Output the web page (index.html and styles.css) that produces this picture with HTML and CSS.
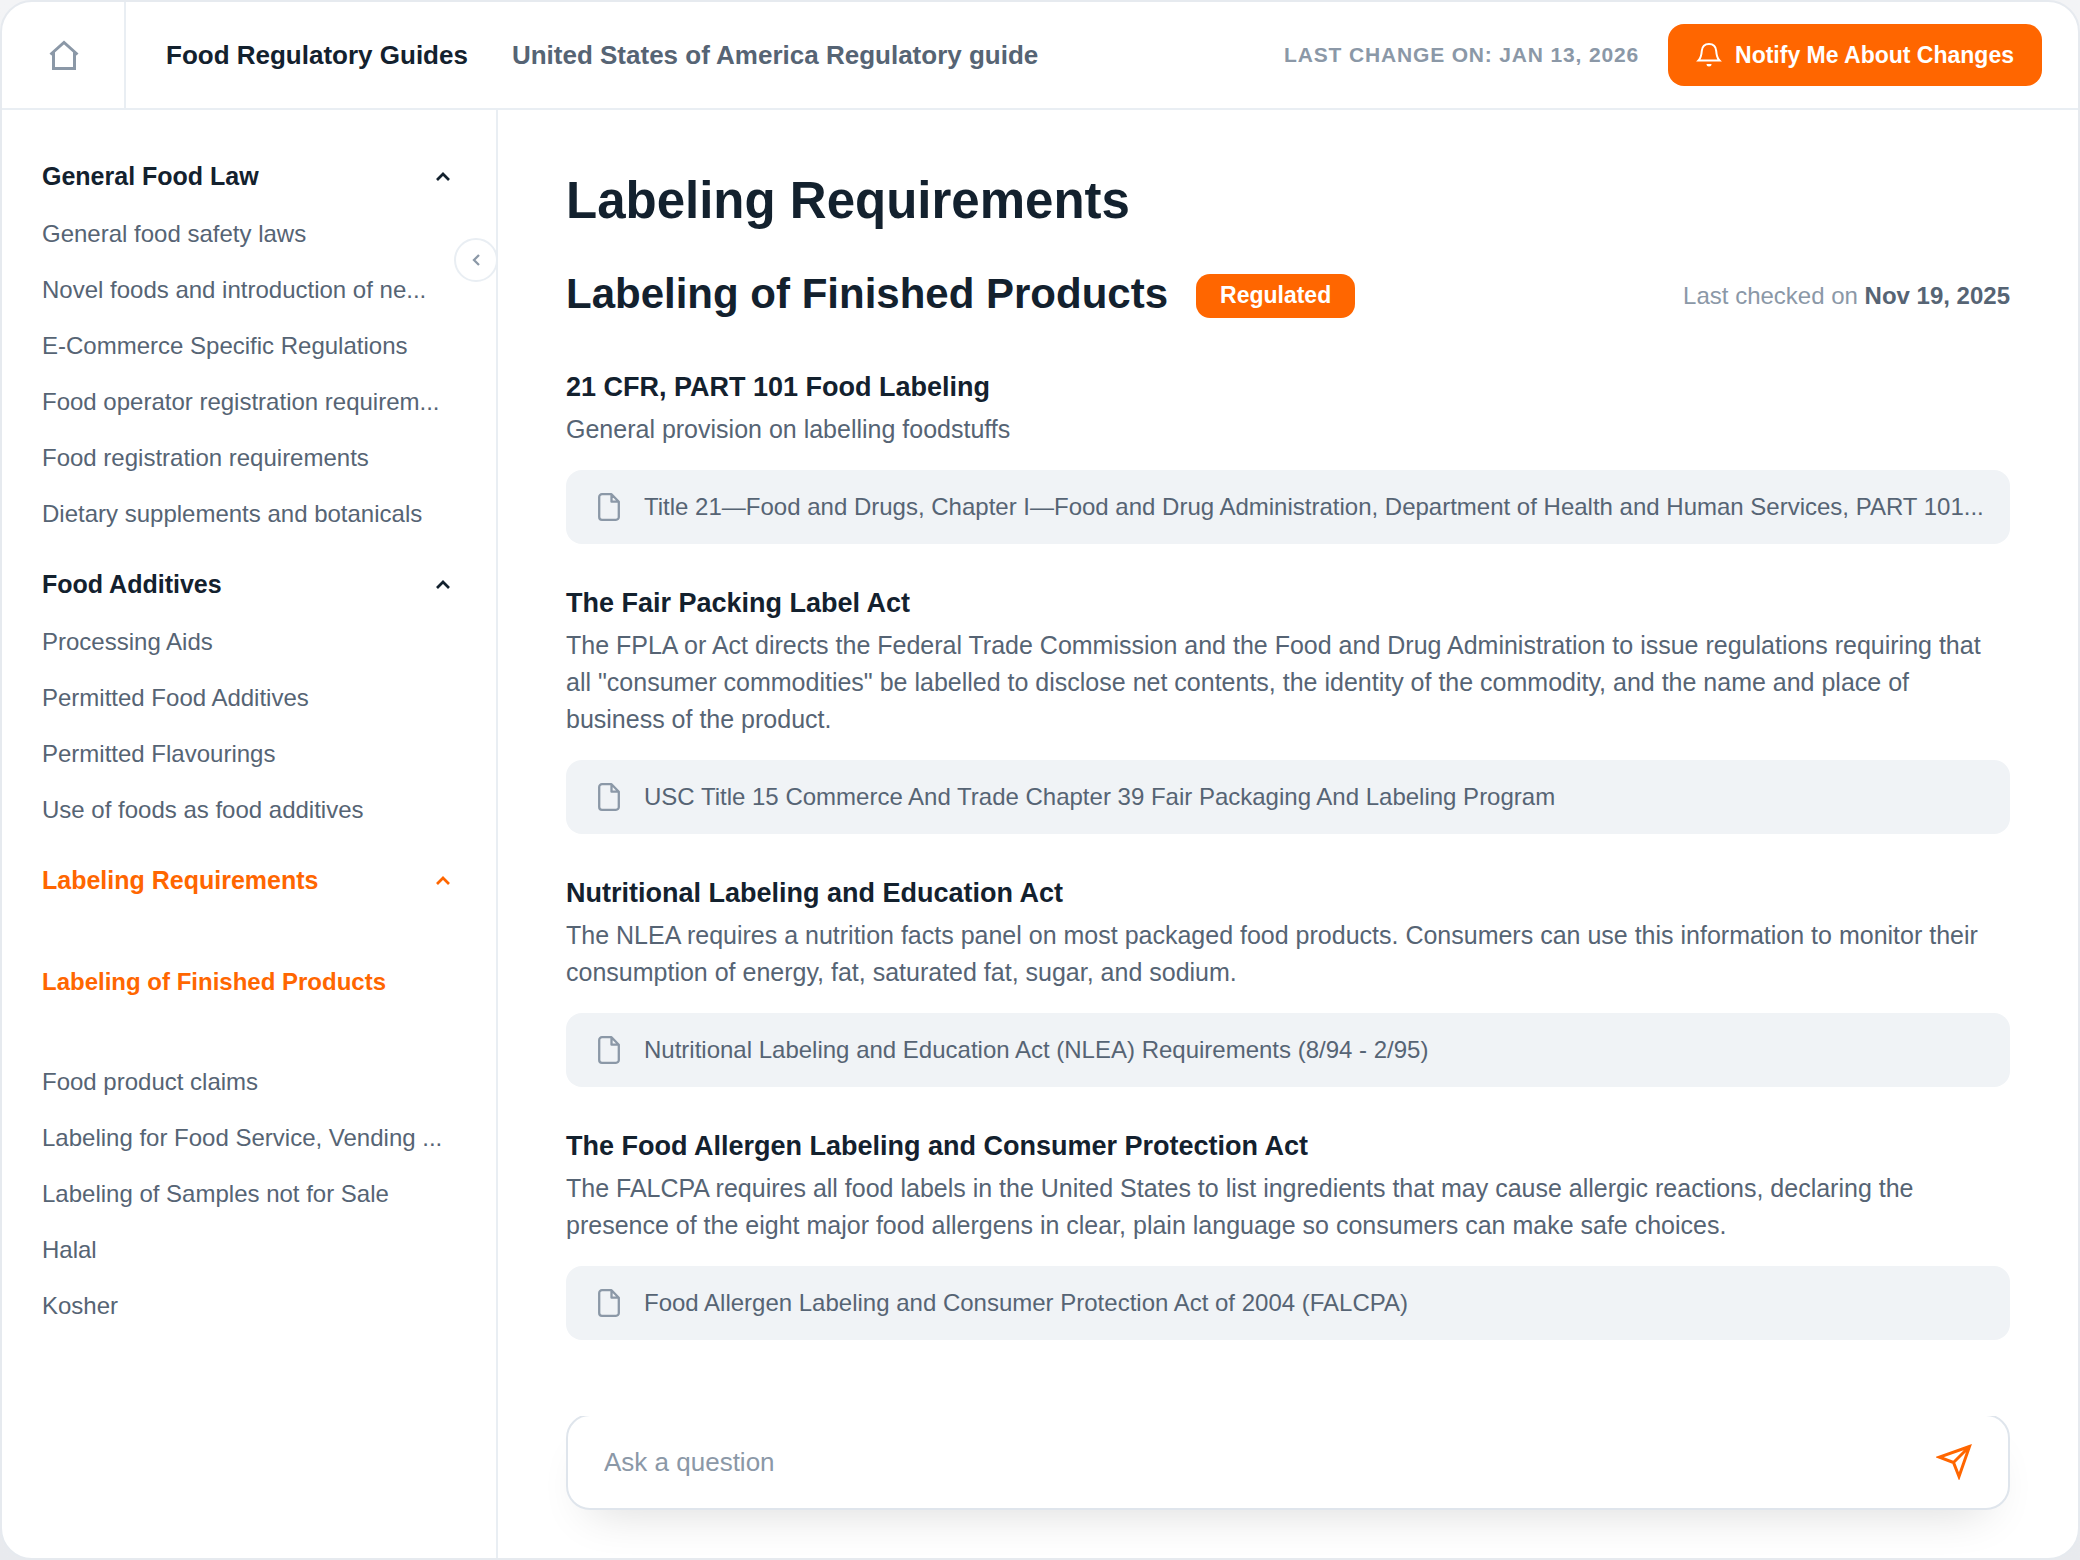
FILE: index.html
```html
<!DOCTYPE html>
<html lang="en">
<head>
<meta charset="utf-8">
<meta name="viewport" content="width=device-width, initial-scale=1">
<title>Food Regulatory Guides</title>
<link rel="stylesheet" href="styles.css">
</head>
<body>
<div class="app">
  <header class="topbar">
    <a class="home" href="#" aria-label="Home">
      <svg class="icon-home" viewBox="0 0 32 32" fill="none" stroke="currentColor" stroke-width="3" aria-hidden="true"><path d="M2.500 15.500 16 3.500l13.500 12M5.500 13.500v16h21v-16"/></svg>
    </a>
    <nav class="crumbs" aria-label="Breadcrumb">
      <a class="crumb crumb-root" href="#">Food Regulatory Guides</a>
      <a class="crumb" href="#">United States of America Regulatory guide</a>
    </nav>
    <span class="last-change">LAST CHANGE ON: JAN 13, 2026</span>
    <button class="notify" type="button">
      <svg class="icon-bell" viewBox="0 0 26 26" fill="none" stroke="currentColor" stroke-width="2" aria-hidden="true"><path d="M2.500 18.500C4.500 16.500 5.500 13 5.800 8.800 6.200 4.500 9 2 13 2s6.800 2.500 7.200 6.800c.3 4.200 1.300 7.700 3.300 9.700z"/><path fill="currentColor" stroke="none" d="M10.500 22h5a2.500 2.500 0 0 1-5 0z"/></svg>
      Notify Me About Changes
    </button>
  </header>

  <div class="body">
    <aside class="sidebar">
      <button class="collapse" type="button" aria-label="Collapse sidebar">
        <svg class="icon-left" viewBox="0 0 8 12" fill="none" stroke="currentColor" stroke-width="2.300" aria-hidden="true"><path d="M7 1 2 6l5 5"/></svg>
      </button>
      <nav class="menu" aria-label="Guide sections">
        <section class="group">
          <button class="group-title" type="button" aria-expanded="true">General Food Law
            <svg class="icon-up" viewBox="0 0 14 9" fill="none" stroke="currentColor" stroke-width="2.700" aria-hidden="true"><path d="m1 8 6-6 6 6"/></svg>
          </button>
          <a class="item" href="#">General food safety laws</a>
          <a class="item" href="#">Novel foods and introduction of ne...</a>
          <a class="item" href="#">E-Commerce Specific Regulations</a>
          <a class="item" href="#">Food operator registration requirem...</a>
          <a class="item" href="#">Food registration requirements</a>
          <a class="item" href="#">Dietary supplements and botanicals</a>
        </section>
        <section class="group">
          <button class="group-title" type="button" aria-expanded="true">Food Additives
            <svg class="icon-up" viewBox="0 0 14 9" fill="none" stroke="currentColor" stroke-width="2.700" aria-hidden="true"><path d="m1 8 6-6 6 6"/></svg>
          </button>
          <a class="item" href="#">Processing Aids</a>
          <a class="item" href="#">Permitted Food Additives</a>
          <a class="item" href="#">Permitted Flavourings</a>
          <a class="item" href="#">Use of foods as food additives</a>
        </section>
        <section class="group">
          <button class="group-title is-active" type="button" aria-expanded="true">Labeling Requirements
            <svg class="icon-up" viewBox="0 0 14 9" fill="none" stroke="currentColor" stroke-width="2.700" aria-hidden="true"><path d="m1 8 6-6 6 6"/></svg>
          </button>
          <a class="item item-current" href="#" aria-current="page">Labeling of Finished Products</a>
          <a class="item" href="#">Food product claims</a>
          <a class="item" href="#">Labeling for Food Service, Vending ...</a>
          <a class="item" href="#">Labeling of Samples not for Sale</a>
          <a class="item" href="#">Halal</a>
          <a class="item" href="#">Kosher</a>
        </section>
      </nav>
    </aside>

    <main class="main">
      <div class="content">
        <h1 class="page-title">Labeling Requirements</h1>
        <div class="topic">
          <h2 class="topic-title">Labeling of Finished Products</h2>
          <span class="badge">Regulated</span>
          <span class="checked">Last checked on <strong>Nov 19, 2025</strong></span>
        </div>
        <div class="rules">
          <article class="rule">
            <h3 class="rule-title">21 CFR, PART 101 Food Labeling</h3>
            <p class="rule-text">General provision on labelling foodstuffs</p>
            <a class="doc" href="#">
              <svg class="icon-file" viewBox="0 0 22 28" fill="none" stroke="currentColor" stroke-width="2.300" stroke-linejoin="round" aria-hidden="true"><path d="M13.500 1.200H4A2.800 2.800 0 0 0 1.200 4v20A2.800 2.800 0 0 0 4 26.800h14a2.800 2.800 0 0 0 2.800-2.800V8.700zM13.500 1.200v7.500h7.300"/></svg>
              <span class="doc-name">Title 21—Food and Drugs, Chapter I—Food and Drug Administration, Department of Health and Human Services, PART 101...</span>
            </a>
          </article>
          <article class="rule">
            <h3 class="rule-title">The Fair Packing Label Act</h3>
            <p class="rule-text">The FPLA or Act directs the Federal Trade Commission and the Food and Drug Administration to issue regulations requiring that all "consumer commodities" be labelled to disclose net contents, the identity of the commodity, and the name and place of business of the product.</p>
            <a class="doc" href="#">
              <svg class="icon-file" viewBox="0 0 22 28" fill="none" stroke="currentColor" stroke-width="2.300" stroke-linejoin="round" aria-hidden="true"><path d="M13.500 1.200H4A2.800 2.800 0 0 0 1.200 4v20A2.800 2.800 0 0 0 4 26.800h14a2.800 2.800 0 0 0 2.800-2.800V8.700zM13.500 1.200v7.500h7.300"/></svg>
              <span class="doc-name">USC Title 15 Commerce And Trade Chapter 39 Fair Packaging And Labeling Program</span>
            </a>
          </article>
          <article class="rule">
            <h3 class="rule-title">Nutritional Labeling and Education Act</h3>
            <p class="rule-text">The NLEA requires a nutrition facts panel on most packaged food products. Consumers can use this information to monitor their consumption of energy, fat, saturated fat, sugar, and sodium.</p>
            <a class="doc" href="#">
              <svg class="icon-file" viewBox="0 0 22 28" fill="none" stroke="currentColor" stroke-width="2.300" stroke-linejoin="round" aria-hidden="true"><path d="M13.500 1.200H4A2.800 2.800 0 0 0 1.200 4v20A2.800 2.800 0 0 0 4 26.800h14a2.800 2.800 0 0 0 2.800-2.800V8.700zM13.500 1.200v7.500h7.300"/></svg>
              <span class="doc-name">Nutritional Labeling and Education Act (NLEA) Requirements (8/94 - 2/95)</span>
            </a>
          </article>
          <article class="rule">
            <h3 class="rule-title">The Food Allergen Labeling and Consumer Protection Act</h3>
            <p class="rule-text">The FALCPA requires all food labels in the United States to list ingredients that may cause allergic reactions, declaring the presence of the eight major food allergens in clear, plain language so consumers can make safe choices.</p>
            <a class="doc" href="#">
              <svg class="icon-file" viewBox="0 0 22 28" fill="none" stroke="currentColor" stroke-width="2.300" stroke-linejoin="round" aria-hidden="true"><path d="M13.500 1.200H4A2.800 2.800 0 0 0 1.200 4v20A2.800 2.800 0 0 0 4 26.800h14a2.800 2.800 0 0 0 2.800-2.800V8.700zM13.500 1.200v7.500h7.300"/></svg>
              <span class="doc-name">Food Allergen Labeling and Consumer Protection Act of 2004 (FALCPA)</span>
            </a>
          </article>
        </div>
      </div>
      <div class="ask-dock">
        <form class="ask">
          <input class="ask-input" type="text" placeholder="Ask a question" aria-label="Ask a question">
          <button class="send" type="button" aria-label="Send">
            <svg class="icon-send" viewBox="0 0 36 36" fill="none" stroke="currentColor" stroke-width="3" aria-hidden="true"><path d="M33.500 2.500 3.500 13.200 17.500 18.500 23 32.500zM33.500 2.500l-16 16"/></svg>
          </button>
        </form>
      </div>
    </main>
  </div>
</div>
</body>
</html>
```
FILE: styles.css
```css
:root {
  --ink: #13212e;
  --text: #566474;
  --muted: #8b98a7;
  --line: #e9eef3;
  --panel: #f0f3f6;
  --accent: #ff6600;
}

* { box-sizing: border-box; }

body {
  margin: 0;
  background: linear-gradient(#f3f4f6, #e8eaee);
  color: var(--text);
  font-family: "Liberation Sans", Arial, sans-serif;
  font-size: 24px;
  line-height: 32px;
}

button, input { font: inherit; color: inherit; border: 0; background: none; padding: 0; margin: 0; }
button { cursor: pointer; }
a { color: inherit; text-decoration: none; }
h1, h2, h3, p { margin: 0; }
svg { display: block; flex: none; }

.app {
  display: flex;
  flex-direction: column;
  min-height: 100vh;
  border: 2px solid #e6eaef;
  border-radius: 32px;
  background: #fff;
  overflow: hidden;
}

/* Top bar */
.topbar {
  display: flex;
  align-items: center;
  height: 108px;
  padding-right: 36px;
  border-bottom: 2px solid var(--line);
}
.home {
  display: flex;
  align-items: center;
  justify-content: center;
  align-self: stretch;
  width: 124px;
  padding-left: 2px;
  border-right: 2px solid var(--line);
  color: var(--muted);
}
.icon-home { width: 32px; height: 32px; }
.crumbs {
  display: flex;
  flex: 1;
  gap: 44px;
  padding-left: 40px;
  font-size: 26px;
  font-weight: 700;
}
.crumb-root { color: var(--ink); }
.last-change {
  margin-right: 29px;
  color: var(--muted);
  font-size: 21px;
  font-weight: 700;
  letter-spacing: 0.04em;
}
.notify {
  display: flex;
  align-items: center;
  gap: 13px;
  height: 62px;
  padding: 0 28px;
  border-radius: 16px;
  background: var(--accent);
  color: #fff;
  font-size: 23px;
  font-weight: 700;
}
.icon-bell { width: 26px; height: 26px; }

.body { display: flex; flex: 1; }

/* Sidebar */
.sidebar {
  position: relative;
  flex: none;
  width: 496px;
  padding: 36px 46px 36px 40px;
  border-right: 2px solid var(--line);
}
.collapse {
  position: absolute;
  top: 128px;
  right: -2px;
  display: flex;
  align-items: center;
  justify-content: center;
  width: 44px;
  height: 44px;
  border: 2px solid var(--line);
  border-radius: 50%;
  background: #fff;
  color: var(--muted);
}
.icon-left { width: 8px; height: 12px; }
.menu { display: flex; flex-direction: column; gap: 12px; }
.group { display: flex; flex-direction: column; }
.group-title {
  display: flex;
  align-items: center;
  justify-content: space-between;
  height: 60px;
  color: var(--ink);
  font-size: 25px;
  font-weight: 700;
}
.group-title.is-active, .item-current { color: var(--accent); }
.icon-up { width: 14px; height: 9px; }
.item { line-height: 56px; white-space: nowrap; }
.item-current { padding: 44px 0; font-weight: 700; }

/* Main column */
.main { display: flex; flex: 1; flex-direction: column; min-width: 0; }
/* The reading area sits over the top edge of the question box */
.content {
  position: relative;
  z-index: 1;
  flex: 1;
  margin-bottom: -2px;
  padding: 61px 68px 40px;
  background: #fff;
}
.page-title {
  color: var(--ink);
  font-size: 51px;
  line-height: 60px;
}
.topic {
  display: flex;
  align-items: flex-end;
  margin: 39px 0 52px;
}
.topic-title {
  color: var(--ink);
  font-size: 42px;
  line-height: 48px;
}
.badge {
  height: 44px;
  margin-left: 28px;
  padding: 0 24px;
  border-radius: 14px;
  background: var(--accent);
  color: #fff;
  font-size: 23px;
  font-weight: 700;
  line-height: 42px;
}
.checked { margin-left: auto; color: var(--muted); line-height: 44px; }
.checked strong { color: var(--text); }

.rules { display: flex; flex-direction: column; gap: 42px; }
.rule-title {
  margin-bottom: 7px;
  color: var(--ink);
  font-size: 27px;
  line-height: 34px;
}
.rule-text { margin-bottom: 22px; font-size: 25px; line-height: 37px; }
.doc {
  display: flex;
  align-items: center;
  gap: 24px;
  height: 74px;
  padding: 0 24px 0 32px;
  border-radius: 16px;
  background: var(--panel);
}
.icon-file { width: 22px; height: 28px; color: var(--muted); }
.doc-name { overflow: hidden; text-overflow: ellipsis; white-space: nowrap; }

/* Question box */
.ask-dock { padding: 0 68px 48px; }
.ask {
  display: flex;
  align-items: center;
  height: 96px;
  padding: 0 36px;
  border: 2px solid #dfe5ec;
  border-radius: 24px;
  background: #fff;
  box-shadow: 0 24px 48px -24px rgba(0, 0, 0, 0.16);
}
.ask-input { flex: 1; min-width: 0; font-size: 26px; outline: 0; }
.ask-input::placeholder { color: var(--muted); opacity: 1; }
.send { color: var(--accent); }
.icon-send { width: 36px; height: 36px; }
```
